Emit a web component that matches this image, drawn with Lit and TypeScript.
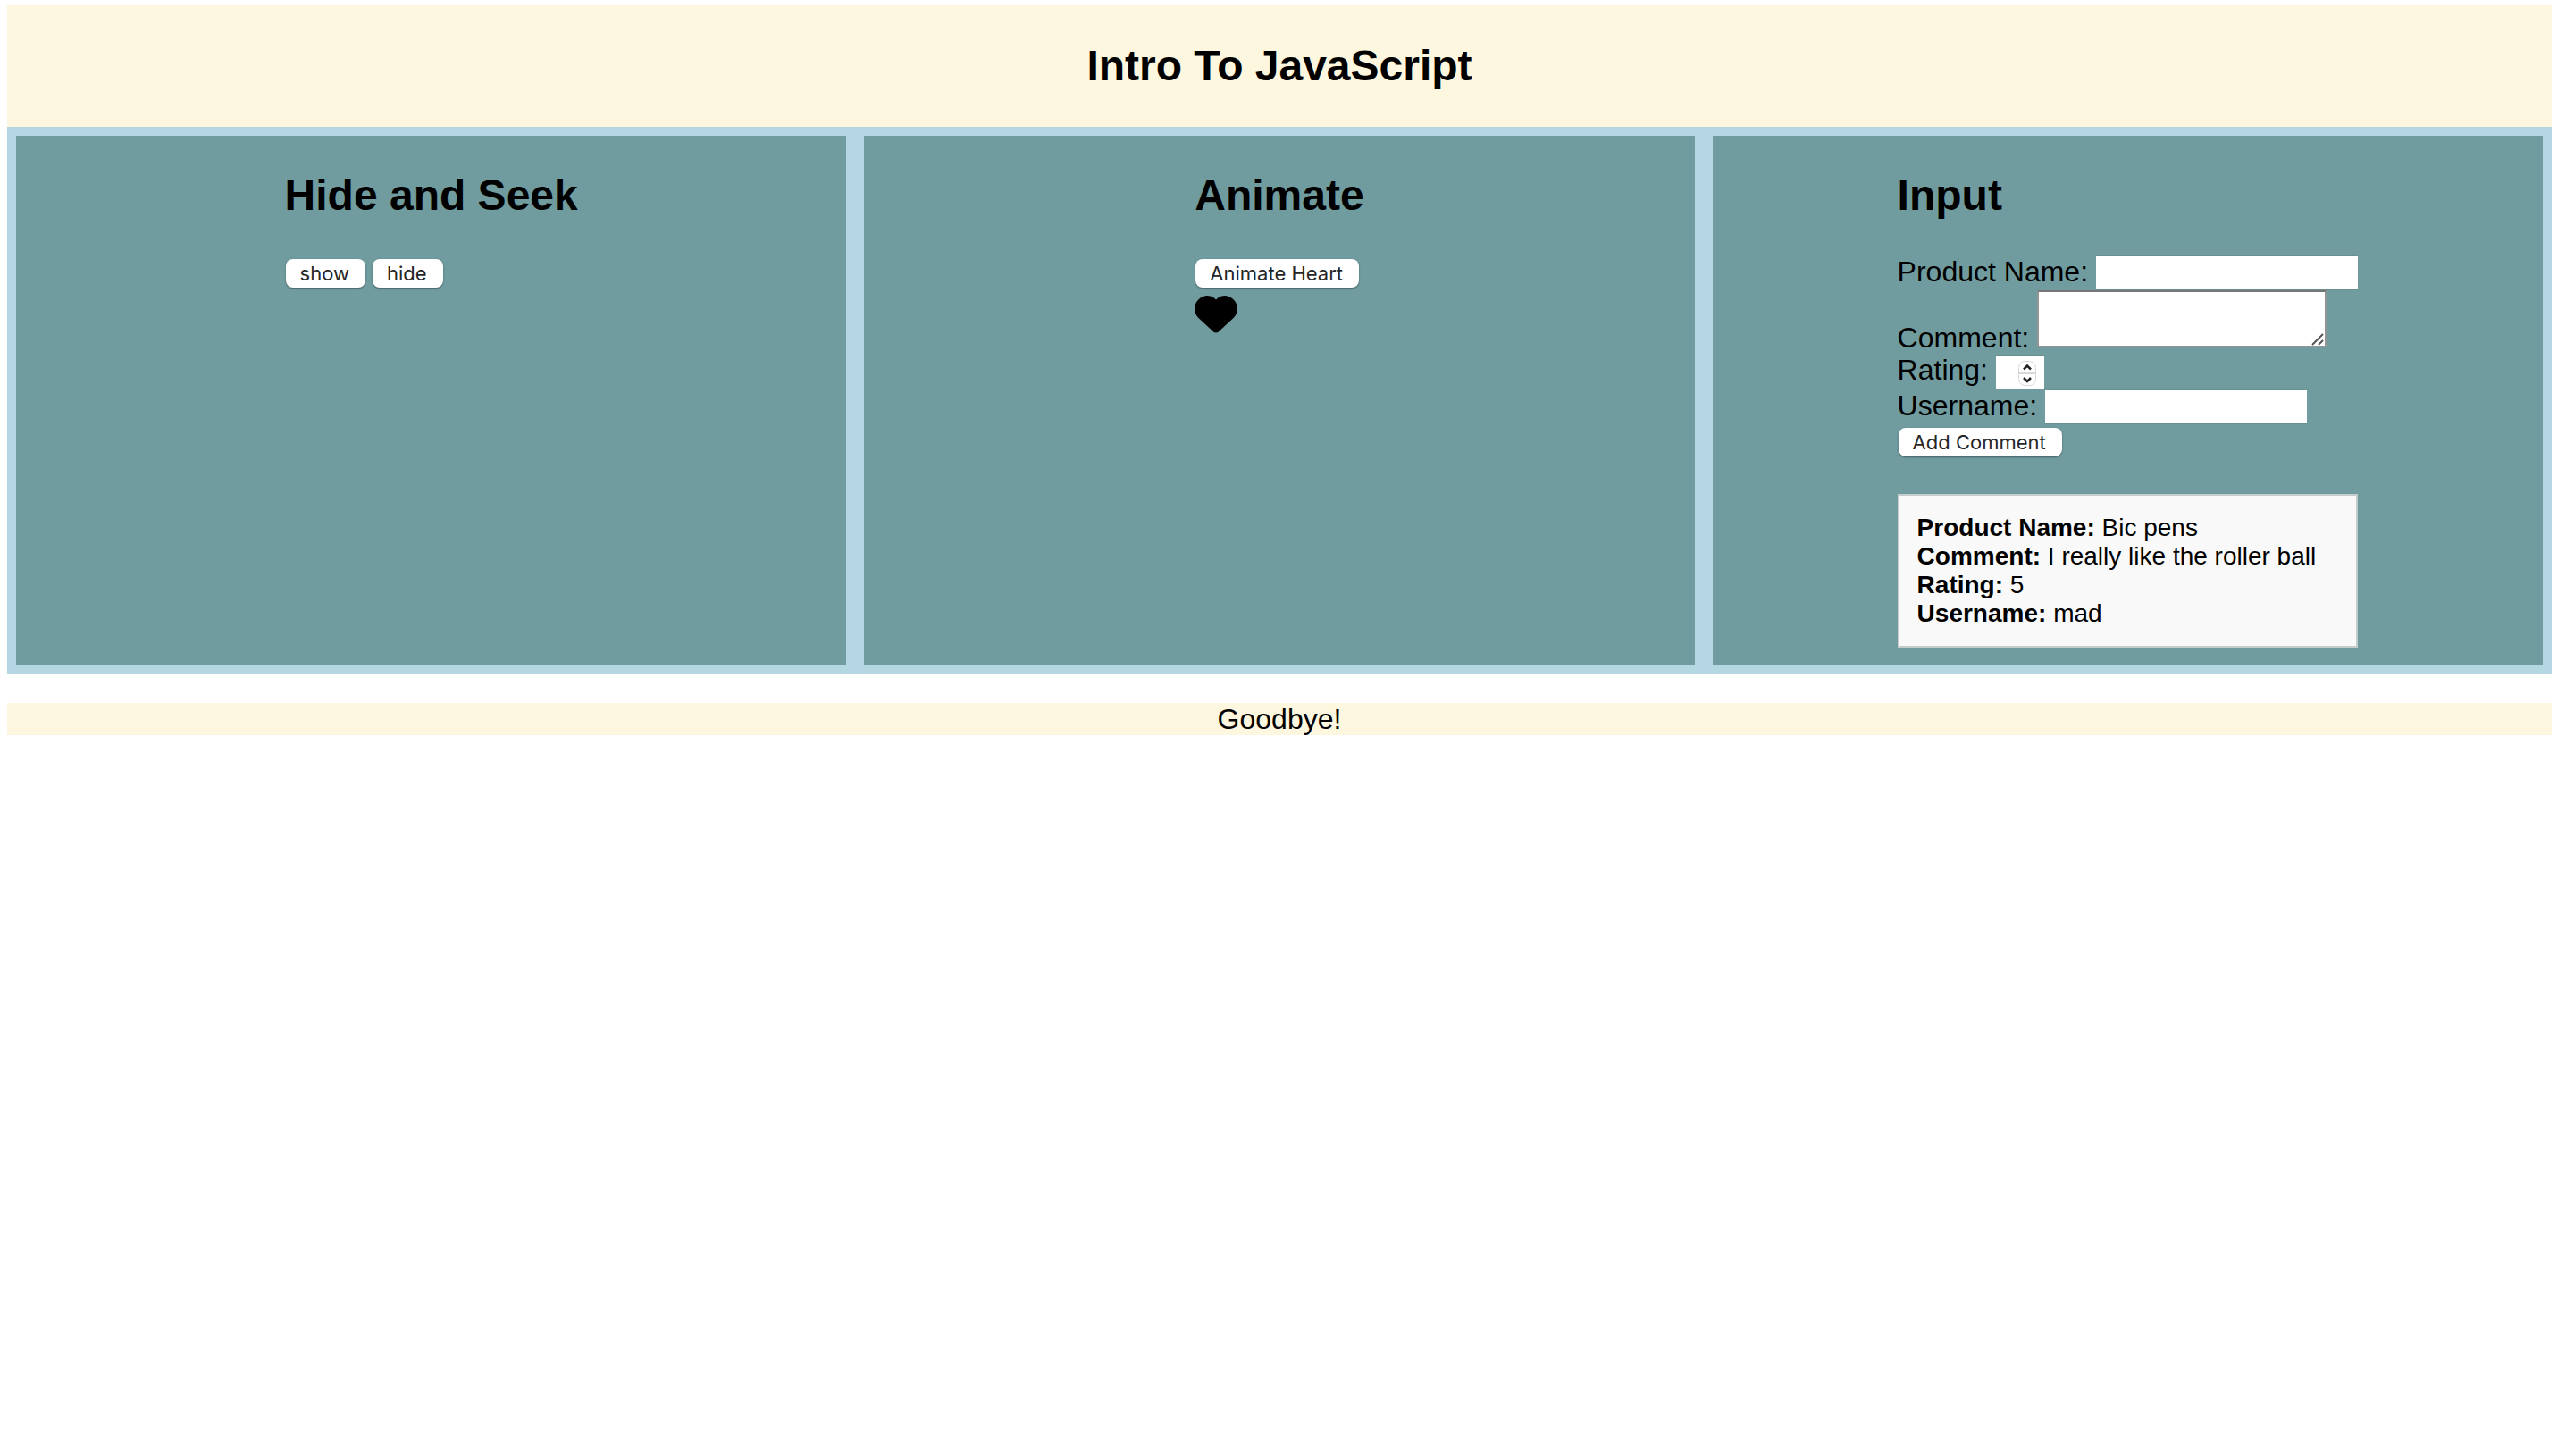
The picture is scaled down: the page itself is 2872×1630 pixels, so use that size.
import { LitElement, html, css } from "lit";
import { customElement, state } from "lit/decorators.js";

interface Review {
  product: string;
  comment: string;
  rating: string;
  username: string;
}

@customElement("app-root")
export class AppRoot extends LitElement {
  static styles = css`
    :host {
      display: block;
      padding: 6px 16px 6px 8px;
      font-family: "Liberation Sans", Arial, sans-serif;
      font-size: 32px;
      line-height: 36px;
      color: #000;
    }
    .banner {
      padding: 40px 0;
      background: #fef7df;
      text-align: center;
    }
    h1,
    h2 {
      margin: 0;
      font-size: 48px;
      font-weight: bold;
    }
    h1 {
      line-height: 56px;
    }
    h2 {
      margin: 40px 0;
      line-height: 54px;
    }
    .board {
      display: grid;
      grid-template-columns: repeat(3, 1fr);
      gap: 20px;
      padding: 10px;
      background: #b5d7e4;
    }
    .panel {
      display: flex;
      justify-content: center;
      background: #709c9f;
    }
    .buttons {
      display: flex;
      gap: 8px;
      padding: 4px 1px;
    }
    button {
      height: 32px;
      padding: 0 18px 0 16px;
      border: 0;
      border-radius: 8px;
      background: #fff;
      box-shadow: 0 1px 2px rgba(0, 0, 0, 0.4);
      color: #262626;
      font-family: Inter, sans-serif;
      font-size: 22px;
      line-height: 32px;
    }
    .heart {
      display: block;
      width: 48px;
      height: 48px;
      fill: #000;
    }
    .field {
      display: flex;
      align-items: flex-start;
      gap: 9px;
      height: 39px;
    }
    .field.tall {
      align-items: flex-end;
      height: 71px;
    }
    .field.rating {
      height: 40px;
    }
    input,
    textarea {
      box-sizing: border-box;
      margin: 0;
      padding: 2px 4px;
      border-radius: 0;
      outline: 0;
      background: #fff;
      font-family: "Liberation Sans", Arial, sans-serif;
      font-size: 26px;
    }
    input {
      width: 293px;
      height: 39px;
      border: 0 solid #6a8f91;
      border-width: 1px 0;
    }
    textarea {
      display: block;
      width: 324px;
      height: 64px;
      border: 2px solid #949494;
      border-top-color: #767676;
      resize: none;
    }
    .area,
    .number {
      position: relative;
      display: flex;
      align-self: flex-start;
    }
    .number {
      align-self: flex-end;
    }
    .number input {
      width: 54px;
      padding-right: 28px;
      appearance: textfield;
    }
    .number input::-webkit-inner-spin-button {
      display: none;
    }
    .stepper {
      position: absolute;
      top: 6px;
      right: 8px;
      width: 22px;
      height: 30px;
    }
    .grip {
      position: absolute;
      right: 3px;
      bottom: 2px;
      width: 14px;
      height: 14px;
    }
    .review {
      margin: 38px 0 20px;
      padding: 20px;
      border: 2px solid #c5cccd;
      background: #f9f9f9;
      font-size: 28px;
      line-height: 32px;
    }
    .review p {
      margin: 0;
    }
    .footer {
      margin: 32px 0 0;
      background: #fef7df;
      text-align: center;
    }
  `;

  @state() private reviews: Review[] = [
    { product: "Bic pens", comment: "I really like the roller ball", rating: "5", username: "mad" },
  ];

  private addReview(event: Event) {
    event.preventDefault();
    const form = event.target as HTMLFormElement;
    const data = new FormData(form);
    const read = (name: string) => String(data.get(name) ?? "");
    this.reviews = [
      ...this.reviews,
      {
        product: read("product"),
        comment: read("comment"),
        rating: read("rating"),
        username: read("username"),
      },
    ];
    form.reset();
  }

  private animateHeart() {
    this.renderRoot
      .querySelector(".heart")
      ?.animate([{ transform: "scale(1)" }, { transform: "scale(1.5)" }, { transform: "scale(1)" }], 600);
  }

  private renderReview(review: Review) {
    return html`
      <div class="review">
        <p><strong>Product Name:</strong> ${review.product}</p>
        <p><strong>Comment:</strong> ${review.comment}</p>
        <p><strong>Rating:</strong> ${review.rating}</p>
        <p><strong>Username:</strong> ${review.username}</p>
      </div>
    `;
  }

  render() {
    return html`
      <header class="banner"><h1>Intro To JavaScript</h1></header>
      <main class="board">
        <section class="panel">
          <div>
            <h2>Hide and Seek</h2>
            <div class="buttons">
              <button type="button">show</button>
              <button type="button">hide</button>
            </div>
          </div>
        </section>
        <section class="panel">
          <div>
            <h2>Animate</h2>
            <div class="buttons">
              <button type="button" @click=${this.animateHeart}>Animate Heart</button>
            </div>
            <svg class="heart" viewBox="0 0 48 48" aria-hidden="true">
              <path d="M24 9.500 L22.200 7.700 C16.800 3.300 9.400 4.300 4.300 9.400 C-1.400 15.100-1.400 24.200 4.200 29.800 L21.200 45.400 C22.800 46.800 25.200 46.800 26.800 45.400 L43.800 29.800 C49.400 24.200 49.400 15.100 43.700 9.400 C38.600 4.300 31.200 3.300 25.800 7.700 Z" />
            </svg>
          </div>
        </section>
        <section class="panel">
          <div>
            <h2>Input</h2>
            <form @submit=${this.addReview}>
              <div class="field">
                <label for="product">Product Name:</label>
                <input id="product" name="product" type="text" />
              </div>
              <div class="field tall">
                <label for="comment">Comment:</label>
                <div class="area">
                  <textarea id="comment" name="comment"></textarea>
                  <svg class="grip" viewBox="0 0 14 14" stroke="#555" stroke-width="2" aria-hidden="true">
                    <path d="M1 13 L13 1 M8 13 L13 8" />
                  </svg>
                </div>
              </div>
              <div class="field rating">
                <label for="rating">Rating:</label>
                <div class="number">
                  <input id="rating" name="rating" type="number" min="1" max="5" />
                  <svg class="stepper" viewBox="0 0 22 30" fill="none" aria-hidden="true">
                    <rect x="1.500" y="1.500" width="19" height="27" rx="7" fill="#fff" stroke="#d8d8d8" />
                    <path d="M1.500 15 H20.500" stroke="#d8d8d8" stroke-width="2" />
                    <path d="M7 10.500 L11 6.500 L15 10.500 M7 20 L11 24 L15 20" stroke="#222" stroke-width="2.500" />
                  </svg>
                </div>
              </div>
              <div class="field">
                <label for="username">Username:</label>
                <input id="username" name="username" type="text" />
              </div>
              <div class="buttons"><button type="submit">Add Comment</button></div>
            </form>
            ${this.reviews.map((review) => this.renderReview(review))}
          </div>
        </section>
      </main>
      <footer class="footer">Goodbye!</footer>
    `;
  }
}
